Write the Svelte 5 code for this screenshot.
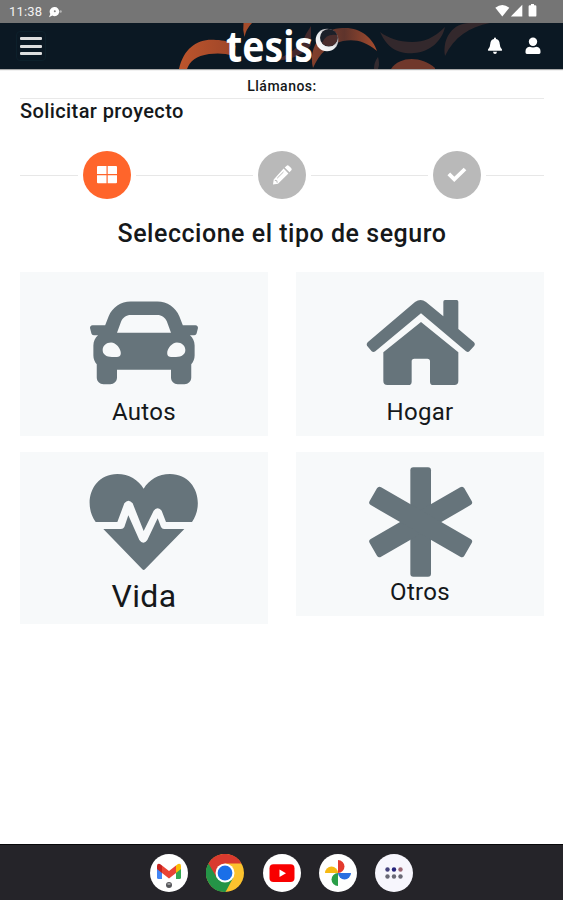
<script>
  const steps = [
    { icon: 'grid', active: true },
    { icon: 'pencil', active: false },
    { icon: 'check', active: false }
  ];

  const types = [
    { icon: 'car', label: 'Autos' },
    { icon: 'home', label: 'Hogar' },
    { icon: 'heart', label: 'Vida', large: true },
    { icon: 'asterisk', label: 'Otros' }
  ];
</script>

<div class="screen">
  <div class="status">
    <span class="time">11:38</span>
    <svg class="chat" width="15" height="12" viewBox="0 0 15 12">
      <path fill="#fff" d="M6 1a4.6 4.6 0 1 1-1.6 8.6L1 11.2l1.3-3.3A4.6 4.6 0 0 1 6 1z" />
      <circle cx="6.8" cy="5.3" r="1" fill="#858585" />
      <circle cx="12.6" cy="5.5" r="1.2" fill="#b5b5b5" />
    </svg>
    <svg class="signals" width="44" height="14" viewBox="0 0 44 14">
      <path fill="#fff" d="M.3 3.8Q7.3-1.6 14.3 3.8L7.3 12.5z" />
      <path fill="#fff" d="M27.3.8v11.7H15.8z" />
      <path fill="#fff" d="M36 0h3v1.2h1.2q1.2 0 1.2 1.2v9q0 1.2-1.2 1.2h-5.4q-1.2 0-1.2-1.2v-9q0-1.2 1.2-1.2H36z" />
    </svg>
  </div>

  <header class="topbar">
    <svg class="swirls" width="563" height="46" viewBox="0 23 563 46" aria-hidden="true">
      <defs>
        <linearGradient id="ember">
          <stop offset="0" stop-color="#bd552c" />
          <stop offset="1" stop-color="#9d4529" />
        </linearGradient>
        <linearGradient id="rust">
          <stop offset="0" stop-color="#84402c" />
          <stop offset=".5" stop-color="#5f342c" />
          <stop offset="1" stop-color="#a64c2e" />
        </linearGradient>
      </defs>
      <path fill="url(#ember)" d="M179 69C184 47 199 38 216 40C224 40 230 42 236 46L234 56C225 53 217 53 209 54C196 56 190 61 187 69z" />
      <path fill="#a54c2b" d="M243.500 23H252Q246 29 244.500 37Q242.500 30 243.500 23z" />
      <path fill="#43292c" d="M306 34L311 26V45Q300 60 272 61Q299 52 306 34z" />
      <path fill="url(#rust)" d="M313 68C308 45 323 28 343 28C360 27 373 38 377 51C365 41 355 39 343 41C329 44 319 54 313 68z" />
      <path fill="#33282c" d="M380 32C389 52 403 54 414 53C430 52 442 41 445 27C434 38 424 42 412 42C399 42 388 38 380 32z" />
      <path fill="#33282c" d="M445 56C442 37 454 23 469 23H490C469 27 454 37 445 56z" />
      <path fill="#70382b" d="M391 69C400 56 421 56 435 68V69z" />
      <path fill="#342b30" d="M374 69Q374 62 378 57Q380 64 378 69z" />
    </svg>
    <button class="menu" aria-label="Menú">
      <span></span><span></span><span></span>
    </button>
    <svg class="brand" width="116" height="46" viewBox="225 23 116 46">
      <defs>
        <linearGradient id="ring" x1="0" y1="1" x2="1" y2="0">
          <stop offset="0" stop-color="#fff" />
          <stop offset=".5" stop-color="#e8eaec" />
          <stop offset="1" stop-color="#756e73" />
        </linearGradient>
      </defs>
      <text x="226" y="62" textLength="87" lengthAdjust="spacingAndGlyphs">tesis</text>
      <circle cx="327" cy="40" r="11.300" fill="url(#ring)" />
      <circle cx="328.800" cy="37.800" r="8.800" fill="#1c2029" />
      <path fill="#4a2d2c" d="M322 43Q326 33 337 35Q339 41 333 45.500Q326 47.500 322 43z" />
    </svg>
    <div class="actions">
      <svg width="16" height="18" viewBox="0 0 16 18">
        <path fill="#fff" d="M8 .5q1 0 1 1v.6q3.500.8 3.700 4.600.2 4 2.300 5.700.5 1.200-.7 1.400H1.700Q.5 13.600 1 12.400 3.100 10.700 3.300 6.700 3.500 2.900 7 2.100v-.6q0-1 1-1zM6 14.800h4q-.3 2.200-2 2.200t-2-2.200z" />
      </svg>
      <svg width="16" height="18" viewBox="0 0 16 18">
        <circle cx="8" cy="4.700" r="4.200" fill="#fff" />
        <path fill="#fff" d="M4.500 9.800q3.500 1.600 7 0 4 .6 4 4.500v1.200q0 1.400-1.400 1.400H1.900Q.5 16.900.5 15.500v-1.200q0-3.900 4-4.500z" />
      </svg>
    </div>
  </header>

  <main>
    <p class="call">Llámanos:</p>
    <h1>Solicitar proyecto</h1>

    <div class="stepper">
      {#each steps as step}
        <div class="step">
          <span class="dot" class:active={step.active}>
            {#if step.icon === 'grid'}
              <svg width="20" height="18" viewBox="0 0 20 18">
                <path fill="#fff" d="M1 0h8.500v8H0V1q0-1 1-1zM10.700 0H19q1 0 1 1v7h-9.300zM0 9.200h9.500v8H1q-1 0-1-1zM10.700 9.200H20v7q0 1-1 1h-8.300z" />
              </svg>
            {:else if step.icon === 'pencil'}
              <svg width="20" height="20" viewBox="0 0 20 20">
                <path fill="#fff" d="M11.600 3.600l4.800 4.800L6 18.700l-5 .7.700-5zM12.700 2.500L14.400.9q1.300-1.200 2.600 0l2.100 2.100q1.200 1.300 0 2.600l-1.600 1.700z" />
                <path fill="none" stroke="#b9b9b9" d="M5.200 13.200l6.300-6.300M2.800 15.300l2 .4.400 2" />
              </svg>
            {:else}
              <svg width="20" height="16" viewBox="0 0 20 16">
                <path fill="none" stroke="#fff" stroke-width="3.800" d="M1.800 6.800l5.500 5.600L18 2" />
              </svg>
            {/if}
          </span>
        </div>
      {/each}
    </div>

    <h2>Seleccione el tipo de seguro</h2>

    <div class="types">
      {#each types as type}
        <div class="card" class:large={type.large}>
          {#if type.icon === 'car'}
            <svg viewBox="0 0 512 512">
              <path d="M499.990 176h-59.870l-16.640-41.600C406.380 91.630 365.570 64 319.500 64h-127c-46.060 0-86.880 27.630-103.990 70.400L71.870 176H12.010C4.200 176-1.530 183.340.370 190.910l6 24C7.700 220.250 12.500 224 18.010 224h20.070C24.650 235.730 16 252.780 16 272v48c0 16.120 6.160 30.670 16 41.930V424c0 17.670 14.330 32 32 32h32c17.670 0 32-14.330 32-32v-36h256v36c0 17.670 14.330 32 32 32h32c17.670 0 32-14.330 32-32v-62.070c9.840-11.250 16-25.800 16-41.930v-48c0-19.220-8.650-36.270-22.070-48H494c5.510 0 10.310-3.750 11.640-9.090l6-24c1.890-7.570-3.840-14.910-11.650-14.910zM147.930 158.170c7.290-18.220 24.940-30.170 44.570-30.170h127c19.630 0 37.280 11.950 44.570 30.170L384 212H128zM104 327c-27 0-44-12.760-44-33S76.800 258 100 258s46 28.710 46 50-18 19-42 19zm304 0c-24 0-42 2.200-42-19S388.800 258 412 258s40 15.760 40 36-17 33-44 33z" fill-rule="evenodd" />
            </svg>
          {:else if type.icon === 'home'}
            <svg viewBox="243 69 324 324">
              <path d="M260 259L246 242Q243 237 248 232L390 111Q407 99 423 111L475 154V110q0-5 5-5h35q5 0 5 5V192L567 232Q572 237 568 242L553 259Q549 263 543 259L408 145L271 259Q265 263 260 259z" />
              <path d="M408 171L520 262V348q0 12-12 12H445q-10 0-10-10V289q0-8-8-8H388q-8 0-8 8V350q0 10-10 10H307q-12 0-12-12V262z" />
            </svg>
          {:else if type.icon === 'heart'}
            <svg viewBox="240 69 324 324">
              <path d="M257 231C217 175 245 87 322 87C357 87 385 105 401 131C417 105 445 87 480 87C557 87 585 175 546 231H468L455 197Q443 183 431 197L401 258L368 175Q355 160 343 175L322 231z" />
              <path d="M280 252H333Q340 252 343 246L355 211L388 285Q400 302 412 285L443 220L453 246Q456 252 462 252H523L405 373Q401 377 397 373z" />
            </svg>
          {:else}
            <svg viewBox="243 69 324 324">
              {#each [0, 60, -60] as angle}
                <rect x="376" y="67" width="62" height="328" rx="9" transform="rotate({angle} 407 231)" />
              {/each}
            </svg>
          {/if}
          <span class="label">{type.label}</span>
        </div>
      {/each}
    </div>
  </main>

  <nav class="dock">
    <!-- mail -->
    <svg viewBox="0 0 38 38">
      <circle cx="19" cy="19" r="19" fill="#fff" />
      <path fill="#4285f4" d="M7 12l5 4v9H8.500Q7 25 7 23.500z" />
      <path fill="#34a853" d="M31 12l-5 4v9h3.500Q31 25 31 23.500z" />
      <path fill="#fbbc04" d="M26 11.500l2-1.500q3-1 3 2v3l-5 4z" />
      <path fill="#c5221f" d="M12 11.500L10 10q-3-1-3 2v3l5 4z" />
      <path fill="#ea4335" d="M12 11.500l7 5.500 7-5.500V19l-7 5.500L12 19z" />
      <circle cx="19" cy="31" r="3" fill="#55565a" />
      <path fill="#ddd" d="M17.500 29.500h3v1h-3z" />
    </svg>
    <!-- browser -->
    <svg viewBox="0 0 38 38">
      <circle cx="19" cy="19" r="19" fill="#fbc22e" />
      <path fill="#249447" d="M19 19L2.500 9.500A19 19 0 0 0 19.500 38L27.200 23.700z" />
      <path fill="#d93a2e" d="M2.500 9.500A19 19 0 0 1 35.500 9.500H19L10.800 23.700z" />
      <circle cx="19" cy="19" r="9.500" fill="#fff" />
      <circle cx="19" cy="19" r="7.400" fill="#1a6fe8" />
    </svg>
    <!-- video -->
    <svg viewBox="0 0 38 38">
      <circle cx="19" cy="19" r="19" fill="#fff" />
      <rect x="6.500" y="10.300" width="25" height="17.700" rx="4" fill="#f90000" />
      <path fill="#fff" d="M16.500 15.500l6.500 3.700-6.500 3.700z" />
    </svg>
    <!-- photos -->
    <svg viewBox="0 0 38 38">
      <circle cx="19" cy="19" r="19" fill="#fff" />
      <path fill="#e33b2e" d="M19 6a6.500 6.500 0 0 1 0 13z" />
      <path fill="#2b6fe0" d="M32 19a6.500 6.500 0 0 1-13 0z" />
      <path fill="#2a9f48" d="M19 32a6.500 6.500 0 0 1 0-13z" />
      <path fill="#f6b913" d="M6 19a6.500 6.500 0 0 1 13 0z" />
    </svg>
    <!-- all apps -->
    <svg viewBox="0 0 38 38">
      <circle cx="19" cy="19" r="19" fill="#f7f6fd" />
      <circle cx="12.500" cy="15.500" r="2.200" fill="#45437c" />
      <circle cx="19" cy="15.500" r="2.200" fill="#26247c" />
      <circle cx="25.500" cy="15.500" r="2.200" fill="#9a6673" />
      <circle cx="12.500" cy="22.500" r="2.200" fill="#696975" />
      <circle cx="19" cy="22.500" r="2.200" fill="#696975" />
      <circle cx="25.500" cy="22.500" r="2.200" fill="#696975" />
    </svg>
  </nav>
</div>

<style>
  :global(body) {
    margin: 0;
    background: #fff;
  }
  .screen {
    display: flex;
    flex-direction: column;
    width: 563px;
    height: 900px;
    overflow: hidden;
    font-family: Roboto, sans-serif;
    color: #15181a;
  }
  svg {
    display: block;
    flex: none;
  }

  .status {
    display: flex;
    align-items: center;
    height: 23px;
    padding: 0 24px 0 9px;
    box-sizing: border-box;
    background: #757575;
  }
  .time {
    width: 34px;
    font-size: 13px;
    line-height: 23px;
    letter-spacing: 0.2px;
    color: #f2f2f2;
  }
  .chat {
    margin-left: 5px;
  }
  .signals {
    margin-left: auto;
    margin-top: -1px;
  }

  .topbar {
    position: relative;
    display: flex;
    align-items: center;
    height: 46px;
    padding: 0 22px 0 16px;
    box-sizing: border-box;
    background: #0b1823;
    box-shadow: 0 1px 1px #aaa;
  }
  .swirls {
    position: absolute;
    inset: 0;
  }
  .menu {
    position: relative;
    display: flex;
    flex-direction: column;
    justify-content: center;
    gap: 4.500px;
    width: 30px;
    height: 30px;
    padding: 0 3px;
    border: 1px solid #0d202b;
    border-radius: 4px;
    background: none;
  }
  .menu span {
    height: 3px;
    border-radius: 1px;
    background: #dedede;
  }
  .brand {
    position: relative;
    margin-left: 179px;
    overflow: visible;
  }
  .brand text {
    font: 700 43px 'Noto Sans', sans-serif;
    fill: #fff;
  }
  .actions {
    position: relative;
    display: flex;
    gap: 22px;
    margin-left: auto;
  }

  main {
    flex: 1;
    padding: 0 19px 0 20px;
  }
  p,
  h1,
  h2 {
    margin: 0;
    font-weight: 500;
  }
  .call {
    height: 29px;
    border-bottom: 1px solid #e9e9e9;
    font-size: 14px;
    line-height: 34px;
    letter-spacing: 0.5px;
    text-align: center;
  }
  h1 {
    font-size: 20px;
    line-height: 24px;
    letter-spacing: 0.4px;
  }
  .stepper {
    display: flex;
    margin-top: 28px;
  }
  .step {
    display: flex;
    flex: 1;
    align-items: center;
  }
  .step::before,
  .step::after {
    content: '';
    flex: 1;
    height: 1px;
    background: #e7e7e7;
  }
  .dot {
    display: flex;
    align-items: center;
    justify-content: center;
    width: 48px;
    height: 48px;
    margin: 0 5px;
    border-radius: 50%;
    background: #b9b9b9;
  }
  .dot.active {
    background: #ff652b;
  }
  h2 {
    margin-top: 18px;
    font-size: 25px;
    line-height: 34px;
    letter-spacing: 0.52px;
    text-align: center;
  }
  .types {
    display: grid;
    grid-template-columns: 1fr 1fr;
    gap: 16px 28px;
    align-items: start;
    margin-top: 21px;
  }
  .card {
    display: flex;
    flex-direction: column;
    align-items: center;
    padding: 16px 0 8px;
    background: #f7f9fa;
  }
  .card svg {
    width: 108px;
    height: 108px;
    overflow: visible;
    fill: #66747b;
  }
  .label {
    font-size: 24px;
    line-height: 32px;
    letter-spacing: 0.3px;
  }
  .large .label {
    font-size: 32px;
    line-height: 40px;
  }

  .dock {
    display: flex;
    align-items: center;
    justify-content: center;
    gap: 18.250px;
    height: 56px;
    border-top: 1px solid #08080a;
    box-sizing: border-box;
    background: #252429;
  }
  .dock svg {
    width: 38px;
    height: 38px;
  }
</style>
